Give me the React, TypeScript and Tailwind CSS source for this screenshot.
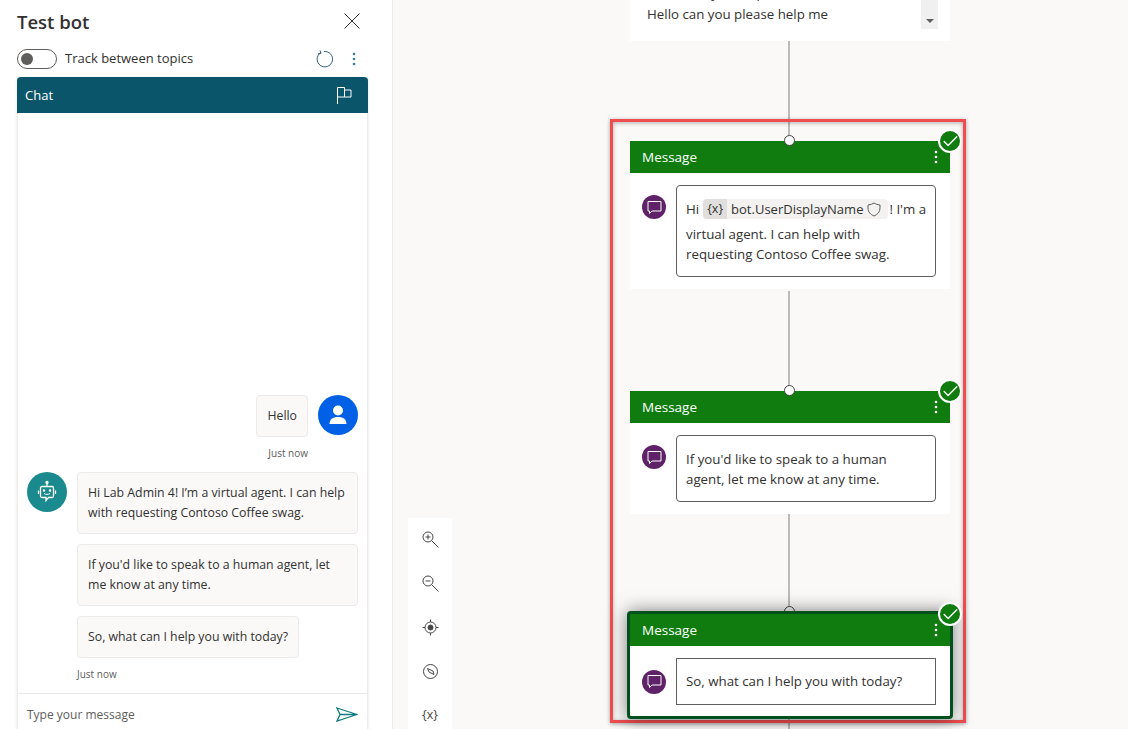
import { Check } from "lucide-react";

const sans = "font-['Open_Sans','Noto_Sans',sans-serif]";

function Dots({ color }: { color: string }) {
  return (
    <svg width="4" height="14" viewBox="0 0 4 14" fill={color}>
      <circle cx="2" cy="2" r="1.300" />
      <circle cx="2" cy="7" r="1.300" />
      <circle cx="2" cy="12" r="1.300" />
    </svg>
  );
}

function MessageIcon() {
  return (
    <div className="w-6 h-6 shrink-0 rounded-full bg-[#5f2167] flex items-center justify-center">
      <svg width="15" height="15" viewBox="0 0 15 15" fill="none" stroke="white" strokeWidth="1">
        <path d="M1 1.500h13v9.500H5l-2.500 2.500V11H1z" />
      </svg>
    </div>
  );
}

function NodeHeader() {
  return (
    <div className="h-8 bg-[#107c10] flex items-center justify-between pl-3 pr-3 text-white text-[13.5px]">
      <span className="pt-px">Message</span>
      <Dots color="white" />
    </div>
  );
}

function CheckBadge({ className }: { className: string }) {
  return (
    <div className={"absolute w-6 h-6 rounded-full bg-[#107c10] border-2 border-white flex items-center justify-center " + className}>
      <Check size={19} strokeWidth={1.700} color="white" />
    </div>
  );
}

function Bubble({ children, className = "" }: { children: React.ReactNode; className?: string }) {
  return (
    <div className={"bg-[#faf9f8] border border-[#edebe9] rounded-sm px-[10px] py-[10px] text-[12.3px] leading-5 text-[#323130] " + className}>
      {children}
    </div>
  );
}

function ChatPanel() {
  return (
    <div className="w-[393px] h-[729px] shrink-0 bg-white border-r border-[#edebe9] pl-[17px] pr-6 flex flex-col">
      <div className="h-[44px] flex items-center justify-between shrink-0">
        <h1 className="text-[18.5px] font-semibold text-[#323130]">Test bot</h1>
        <svg width="16" height="16" viewBox="0 0 16 16" fill="none" stroke="#323130" strokeWidth="1" className="mr-2 -translate-y-px">
          <path d="M0.500 0.500l15 15M15.500 0.500l-15 15" />
        </svg>
      </div>
      <div className="h-[33px] flex items-center shrink-0 pb-[3px]">
        <div className="w-10 h-5 rounded-full border border-[#605e5c] flex items-center pl-[3px]">
          <div className="w-3 h-3 rounded-full bg-[#605e5c]" />
        </div>
        <span className="ml-2 text-[13px] text-[#323130]">Track between topics</span>
        <svg width="18" height="18" viewBox="0 0 18 18" fill="none" stroke="#2f5f78" strokeWidth="1" className="ml-auto mr-[19px]">
          <path d="M5.500 2.800A7.700 7.700 0 1 0 9 1.500" />
          <path d="M5 0.500l1 2.800-3 .7" />
        </svg>
        <div className="mr-3">
          <Dots color="#3a7d96" />
        </div>
      </div>
      <div className="flex-1 flex flex-col min-h-0 border-x border-[#edebe9] shadow-sm">
        <div className="h-9 bg-[#0b556a] -mx-px rounded-t-sm flex items-center justify-between pl-2 pr-4 text-white text-[13px] shrink-0">
          <span className="pt-px">Chat</span>
          <svg width="15" height="17" viewBox="0 0 15 17" fill="none" stroke="white" strokeWidth="1">
            <path d="M0.500 17V0.500h7v9.500h-7M7.500 3h6.500v7H7.500" />
          </svg>
        </div>
        <div className="flex-1 flex flex-col justify-end min-h-0 px-[9px] pb-[13px]">
          <div className="flex justify-end gap-[10px]">
            <div className="flex flex-col items-end">
              <Bubble className="h-[42px]">Hello</Bubble>
              <span className="text-[10px] mt-[10px] text-[#605e5c] leading-[12px]">Just now</span>
            </div>
            <div className="w-10 h-10 rounded-full bg-[#0060e6] flex items-center justify-center">
              <svg width="24" height="24" viewBox="0 0 24 24" fill="white">
                <circle cx="12" cy="7.500" r="5" />
                <path d="M3.500 21c0-4.500 3-7 8.500-7s8.500 2.500 8.500 7z" />
              </svg>
            </div>
          </div>
          <div className="flex gap-[10px] mt-[13px]">
            <div className="w-10 h-10 rounded-full bg-[#1b8a8f] shrink-0 flex items-center justify-center">
              <svg width="22" height="24" viewBox="0 0 22 24" fill="none" stroke="white" strokeWidth="1.300">
                <path d="M6 6.500h10a1.500 1.500 0 0 1 1.500 1.500v8a1.500 1.500 0 0 1-1.500 1.500h-3.500L10 20.500v-3H6a1.500 1.500 0 0 1-1.500-1.500V8A1.500 1.500 0 0 1 6 6.500zM11 6.500V3.500M2.500 10.500v3.500M19.500 10.500v3.500" />
                <circle cx="11" cy="2.500" r="1" fill="white" />
                <path d="M8 13.500c1.500 1.200 4.500 1.200 6 0" strokeWidth="1" />
                <circle cx="8" cy="10.500" r=".6" fill="white" />
                <circle cx="14" cy="10.500" r=".6" fill="white" />
              </svg>
            </div>
            <div className="flex-1 flex flex-col items-start gap-[10px]">
              <Bubble className="w-full h-[62px] whitespace-nowrap">Hi Lab Admin 4! I&#8217;m a virtual agent. I can help<br />with requesting Contoso Coffee swag.</Bubble>
              <Bubble className="w-full h-[62px] whitespace-nowrap">If you'd like to speak to a human agent, let<br />me know at any time.</Bubble>
              <Bubble className="h-[42px]">So, what can I help you with today?</Bubble>
              <span className="text-[10px] text-[#605e5c] leading-[12px]">Just now</span>
            </div>
          </div>
        </div>
        <div className="h-9 border-t border-[#edebe9] flex items-center justify-between px-[9px] pt-[6px] shrink-0">
          <span className="text-[12px] text-[#605e5c]">Type your message</span>
          <svg width="22" height="15" viewBox="0 0 22 15" fill="none" stroke="#0f7c85" strokeWidth="1.300">
            <path d="M1 1l20 6.500L1 14l3-6.500zM4 7.500h17" />
          </svg>
        </div>
      </div>
    </div>
  );
}

function Connector({ top, height }: { top: number; height: number }) {
  return <div className="absolute left-[395px] w-0.5 bg-[#bdbbb8]" style={{ top, height }} />;
}

function Port({ top }: { top: number }) {
  return <div className="absolute left-[391px] w-[11px] h-[11px] rounded-full bg-white border border-[#484644]" style={{ top }} />;
}

function Magnifier({ minus }: { minus?: boolean }) {
  return (
    <svg width="17" height="17" viewBox="0 0 17 17" fill="none" stroke="currentColor" strokeWidth="1">
      <circle cx="6" cy="6" r="5" />
      <path d="M9.700 9.700l6.800 6.800M3.500 6h5" />
      {!minus && <path d="M6 3.500v5" />}
    </svg>
  );
}

function ToolCell({ children }: { children: React.ReactNode }) {
  return <div className="h-11 flex items-center justify-center">{children}</div>;
}

function Canvas() {
  return (
    <div className="relative flex-1 h-[729px] bg-[#faf9f8] overflow-hidden text-[13.3px] text-[#323130]">
      <Connector top={41} height={99} />
      <Connector top={291} height={99} />
      <Connector top={514} height={98} />
      <Connector top={719} height={10} />

      {/* clipped node on top */}
      <div className="absolute left-[237px] top-0 w-80 h-[41px] bg-white overflow-hidden">
        <p className="absolute left-[17px] top-[-17px] leading-5">Hello, can you help me</p>
        <p className="absolute left-[17px] top-[4px] leading-5">Hello can you please help me</p>
        <div className="absolute left-[291px] top-0 w-[17px] h-[29px] bg-[#f0f0f0] flex items-end justify-center pb-[6px]">
          <div className="w-0 h-0 border-x-[4px] border-x-transparent border-t-[4px] border-t-[#605e5c]" />
        </div>
      </div>

      {/* node 1 */}
      <div className="absolute left-[237px] top-[141px] w-80 h-[148px] bg-white">
        <NodeHeader />
        <div className="flex gap-[10px] pl-3 pt-3">
          <div className="pt-[10px]"><MessageIcon /></div>
          <div className="w-[260px] h-[92px] border border-[#605e5c] rounded-sm px-[9px] pt-[13px] leading-5">
            <div className="flex items-center h-5 whitespace-nowrap">
              Hi
              <span className="ml-1 flex items-center h-5 bg-[#f3f2f1] rounded-sm">
                <span className="bg-[#e1dfdd] h-5 px-1 rounded-l-sm text-[12.500px] flex items-center">{"{x}"}</span>
                <span className="ml-1 text-[13px]">bot.UserDisplayName</span>
                <svg width="14" height="15" viewBox="0 0 14 15" fill="none" stroke="#605e5c" strokeWidth="1" className="ml-1 mr-[7px]">
                  <path d="M7 1c1.500 1 3.500 1.700 6 2v3c0 4-2.500 6.500-6 8-3.500-1.500-6-4-6-8V3c2.500-.3 4.500-1 6-2z" />
                </svg>
              </span>
              <span className="ml-px">! I'm a</span>
            </div>
            <div className="mt-[5px]">virtual agent. I can help with</div>
            <div>requesting Contoso Coffee swag.</div>
          </div>
        </div>
      </div>
      <Port top={135} />
      <CheckBadge className="left-[545px] top-[129px]" />

      {/* node 2 */}
      <div className="absolute left-[237px] top-[391px] w-80 h-[123px] bg-white">
        <NodeHeader />
        <div className="flex gap-[10px] pl-3 pt-3">
          <div className="pt-[10px]"><MessageIcon /></div>
          <div className="w-[260px] h-[67px] border border-[#605e5c] rounded-sm px-[9px] pt-[13px] leading-5">
            If you'd like to speak to a human<br />agent, let me know at any time.
          </div>
        </div>
      </div>
      <Port top={385} />
      <CheckBadge className="left-[545px] top-[379px]" />

      {/* red annotation */}
      <div className="absolute left-[217px] top-[119px] w-[356px] h-[604px] border-[3px] border-[#f04d50] shadow-[0_1px_4px_rgba(0,0,0,0.35),inset_0_1px_4px_rgba(0,0,0,0.3)]" />

      {/* selected node */}
      <Port top={606} />
      <div className="absolute left-[234px] top-[611px] w-[326px] h-[108px] bg-white border-[3px] border-[#03501f] rounded-[4px] shadow-[0_0_18px_rgba(0,0,0,0.5)]">
        <NodeHeader />
        <div className="flex items-center gap-[10px] pl-3 pt-3">
          <MessageIcon />
          <div className="w-[260px] h-[47px] border border-[#605e5c] flex items-center px-[9px]">
            So, what can I help you with today?
          </div>
        </div>
      </div>
      <CheckBadge className="left-[545px] top-[602px]" />

      {/* zoom toolbar */}
      <div className="absolute left-[15px] top-[518px] w-11 h-[211px] bg-white flex flex-col text-[#484644]">
        <div className="-mt-px">
          <ToolCell><Magnifier /></ToolCell>
          <ToolCell><Magnifier minus /></ToolCell>
          <ToolCell>
            <svg width="17" height="17" viewBox="0 0 17 17" fill="none" stroke="currentColor" strokeWidth="1">
              <circle cx="8.500" cy="8.500" r="5.500" />
              <circle cx="8.500" cy="8.500" r="2.500" fill="currentColor" />
              <path d="M8.500 0.500v2.500M8.500 14v2.500M0.500 8.500H3M14 8.500h2.500" />
            </svg>
          </ToolCell>
          <ToolCell>
            <svg width="17" height="17" viewBox="0 0 17 17" fill="none" stroke="currentColor" strokeWidth="1">
              <circle cx="8.500" cy="8.500" r="7" />
              <path d="M5.500 5.500l5.500 2.500 1 3.500-5-2.500z" />
            </svg>
          </ToolCell>
          <ToolCell><span className="text-[12.500px] leading-4">{"{x}"}</span></ToolCell>
        </div>
      </div>
    </div>
  );
}

export default function App() {
  return (
    <div className={"flex w-[1128px] h-[729px] overflow-hidden bg-white " + sans}>
      <ChatPanel />
      <Canvas />
    </div>
  );
}
